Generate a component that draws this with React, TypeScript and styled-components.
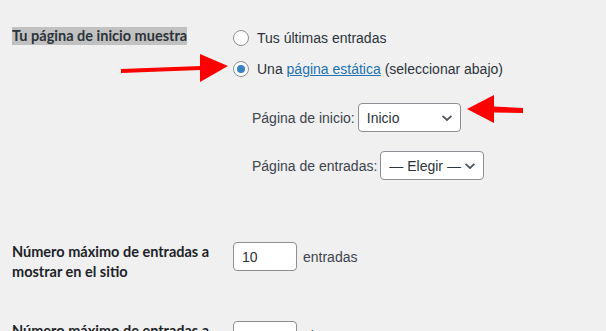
import styled, { createGlobalStyle } from 'styled-components';

const GlobalStyle = createGlobalStyle`
	body {
		margin: 0;
		background: #f0f0f1;
		font-family: 'Liberation Sans', Arial, sans-serif;
		font-size: 14px;
		color: #1d2327;
	}
`;

const Radio = ({ checked }: { checked?: boolean }) => (
	<SRadio>{checked && <span className='dot' />}</SRadio>
);

const Select = ({ value, width }: { value: string; width: number }) => (
	<SSelect $width={width}>
		<span>{value}</span>
		<svg width='12' height='8' viewBox='0 0 12 8'>
			<path d='M1.5 1.8 L6 6 L10.5 1.8' fill='none' stroke='#50575e' strokeWidth='1.8' />
		</svg>
	</SSelect>
);

const App = () => {
	return (
		<SPage>
			<GlobalStyle />
			<Row>
				<Label>
					<span className='selected'>Tu página de inicio muestra</span>
				</Label>
				<Fieldset>
					<RadioRow>
						<Radio />
						<span>Tus últimas entradas</span>
					</RadioRow>
					<RadioRow>
						<Radio checked />
						<span>
							Una <a href='#'>página estática</a> (seleccionar abajo)
						</span>
					</RadioRow>
					<SubFields>
						<SubRow>
							<span>Página de inicio:</span>
							<Select value='Inicio' width={103} />
						</SubRow>
						<SubRow>
							<span>Página de entradas:</span>
							<Select value='— Elegir —' width={104} />
						</SubRow>
					</SubFields>
				</Fieldset>
			</Row>
			<Row $gap={60}>
				<Label $offset={2}>Número máximo de entradas a mostrar en el sitio</Label>
				<InputCell>
					<NumberBox>10</NumberBox>
					<span>entradas</span>
				</InputCell>
			</Row>
			<Row $gap={37}>
				<Label $offset={2}>Número máximo de entradas a mostrar en el feed</Label>
				<InputCell>
					<NumberBox>10</NumberBox>
					<span>elementos</span>
				</InputCell>
			</Row>

			<Arrow $left={119} $top={52} width='112' height='32' viewBox='0 0 112 32'>
				<polygon points='2,17 82,14 82,18 2,21' fill='#f00' />
				<polygon points='81,2 109,14 81,30' fill='#f00' />
			</Arrow>
			<Arrow $left={465} $top={93} width='60' height='32' viewBox='0 0 60 32'>
				<polygon points='28,13.5 58,15 58,20 28,19.5' fill='#f00' />
				<polygon points='2,16 29,2 29,30' fill='#f00' />
			</Arrow>
		</SPage>
	);
};

export default App;

const SPage = styled.div`
	position: relative;
	height: 331px;
	overflow: hidden;
	padding: 22px 0 0 12px;
	box-sizing: border-box;
`;

const Row = styled.div<{ $gap?: number }>`
	display: grid;
	grid-template-columns: 221px 1fr;
	margin-top: ${(p) => p.$gap ?? 0}px;
`;

const Label = styled.div<{ $offset?: number }>`
	width: 205px;
	padding-top: ${(p) => p.$offset ?? 0}px;
	font-family: Lato, 'Liberation Sans', sans-serif;
	font-size: 14.5px;
	font-weight: 700;
	line-height: 20px;
	color: #1d2327;

	.selected {
		display: inline-block;
		margin-top: 5px;
		line-height: 18px;
		background: #c1c1c1;
		color: #2c3338;
	}
`;

const Fieldset = styled.div`
	display: flex;
	flex-direction: column;
`;

const RadioRow = styled.label`
	display: flex;
	align-items: center;
	gap: 8px;
	height: 31px;
	color: #2c3338;

	a {
		color: #2271b1;
		text-decoration: underline;
	}
`;

const SRadio = styled.span`
	width: 16px;
	height: 16px;
	box-sizing: border-box;
	border: 1px solid #8c8f94;
	border-radius: 50%;
	background: #fff;
	display: flex;
	align-items: center;
	justify-content: center;
	flex-shrink: 0;

	.dot {
		width: 8px;
		height: 8px;
		border-radius: 50%;
		background: #3582c4;
	}
`;

const SubFields = styled.div`
	display: flex;
	flex-direction: column;
	gap: 19px;
	padding: 19px 0 0 19px;
`;

const SubRow = styled.div`
	display: flex;
	align-items: center;
	gap: 3px;
	color: #3c434a;
`;

const SSelect = styled.div<{ $width: number }>`
	width: ${(p) => p.$width}px;
	height: 29px;
	box-sizing: border-box;
	border: 1px solid #8c8f94;
	border-radius: 4px;
	background: #fff;
	display: flex;
	align-items: center;
	justify-content: space-between;
	padding: 0 7px 0 8px;
	color: #2c3338;
`;

const InputCell = styled.div`
	display: flex;
	align-items: center;
	gap: 6px;
	height: 29px;
	margin-top: 2px;
	color: #3c434a;
`;

const NumberBox = styled.div`
	width: 64px;
	height: 29px;
	box-sizing: border-box;
	border: 1px solid #8c8f94;
	border-radius: 4px;
	background: #fff;
	padding: 0 8px;
	display: flex;
	align-items: center;
	color: #2c3338;
`;

const Arrow = styled.svg<{ $left: number; $top: number }>`
	position: absolute;
	left: ${(p) => p.$left}px;
	top: ${(p) => p.$top}px;
`;
